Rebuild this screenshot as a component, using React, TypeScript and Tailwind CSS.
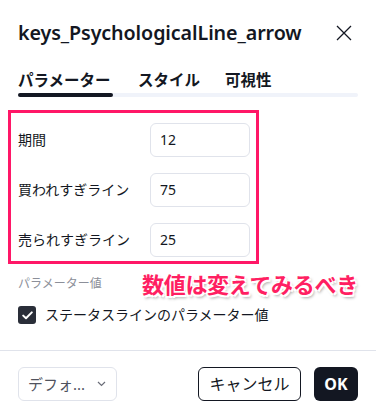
import React from 'react';

const font = { fontFamily: '"Noto Sans", "Noto Sans CJK JP", sans-serif' };

const rows = [
  { label: '期間', value: '12' },
  { label: '買われすぎライン', value: '75' },
  { label: '売られすぎライン', value: '25' },
];

const App: React.FC = () => {
  return (
    <div className="relative w-[376px] h-[413px] bg-white text-[#131722] overflow-hidden" style={font}>
      {/* Header */}
      <div className="flex items-center justify-between pl-[18px] pr-[24px] pt-[19px] h-[47px]">
        <h2 className="text-[19.7px] leading-[28px] font-semibold tracking-[-0.1px] whitespace-nowrap">keys_PsychologicalLine_arrow</h2>
        <svg width="16" height="16" viewBox="0 0 16 16" className="text-[#131722]">
          <path d="M1 1 L15 15 M15 1 L1 15" stroke="currentColor" strokeWidth="1.3" fill="none" />
        </svg>
      </div>

      {/* Tabs */}
      <div className="px-[18px] mt-[21px]">
        <div className="flex gap-[25px] text-[15.5px] leading-[24px] h-[24px] font-bold whitespace-nowrap">
          <span className="w-[95px]">パラメーター</span>
          <span>スタイル</span>
          <span>可視性</span>
        </div>
        <div className="mt-[1px] h-[4px] w-[340px] rounded-full bg-[#f0f3fa] flex">
          <div className="h-[4px] w-[95px] rounded-full bg-[#131722]" />
        </div>
      </div>

      {/* Inputs (highlighted) */}
      <div className="ml-[8px] mt-[13px] w-[251px] border-[3px] border-[#ff1767] pl-[7px] pr-[6px] pt-[10px] pb-[4px] flex flex-col gap-[16px]">
        {rows.map((r) => (
          <div key={r.label} className="flex items-center h-[34px]">
            <span className="w-[132px] text-[14px] leading-[20px] whitespace-nowrap">{r.label}</span>
            <div className="w-[100px] h-[34px] rounded-[6px] border border-[#e0e3eb] flex items-center pl-[9px] text-[14px] leading-[20px]">
              {r.value}
            </div>
          </div>
        ))}
      </div>

      {/* Status line */}
      <div className="px-[18px] mt-[12px] h-[16px] text-[12px] leading-[16px] text-[#8c8f99] whitespace-nowrap">パラメーター値</div>
      <div className="px-[18px] mt-[14px] h-[18px] flex items-center gap-[9px]">
        <div className="w-[18px] h-[18px] rounded-[3px] bg-[#2a2e39] flex items-center justify-center">
          <svg width="11" height="9" viewBox="0 0 11 9">
            <path d="M1.2 4.6 L4 7.3 L9.8 1.4" stroke="#fff" strokeWidth="2" fill="none" strokeLinecap="round" strokeLinejoin="round" />
          </svg>
        </div>
        <span className="text-[14px] leading-[18px] whitespace-nowrap">ステータスラインのパラメーター値</span>
      </div>

      {/* Annotation overlay */}
      <div
        className="absolute left-[142px] top-[268px] text-[22px] leading-[32px] font-bold text-[#ff1f62] tracking-[-0.3px] whitespace-nowrap"
        style={{ textShadow: '-1.5px -1.5px 0 #fff, 1.5px -1.5px 0 #fff, -1.5px 1.5px 0 #fff, 1.5px 1.5px 0 #fff, 2px 3px 3px rgba(0,0,0,0.35)' }}
      >
        数値は変えてみるべき
      </div>

      {/* Footer */}
      <div className="mt-[26px] border-t border-[#e0e3eb] px-[18px] pt-[16px] flex items-center">
        <div className="w-[99px] h-[34px] rounded-[6px] border border-[#e0e3eb] flex items-center justify-between pl-[9px] pr-[10px] text-[15px] leading-[20px] text-[#50535e]">
          <span>デフォ...</span>
          <svg width="9" height="6" viewBox="0 0 9 6">
            <path d="M1 1 L4.5 4.5 L8 1" stroke="#6a6d78" strokeWidth="1.2" fill="none" />
          </svg>
        </div>
        <div className="ml-auto flex gap-[13px]">
          <button className="w-[103px] h-[34px] rounded-[6px] border border-[#131722] text-[16px] leading-[20px] text-[#131722] bg-white">
            キャンセル
          </button>
          <button className="w-[44px] h-[34px] rounded-[6px] bg-[#131722] text-[16px] leading-[20px] font-bold text-white">
            OK
          </button>
        </div>
      </div>
    </div>
  );
};

export default App;
